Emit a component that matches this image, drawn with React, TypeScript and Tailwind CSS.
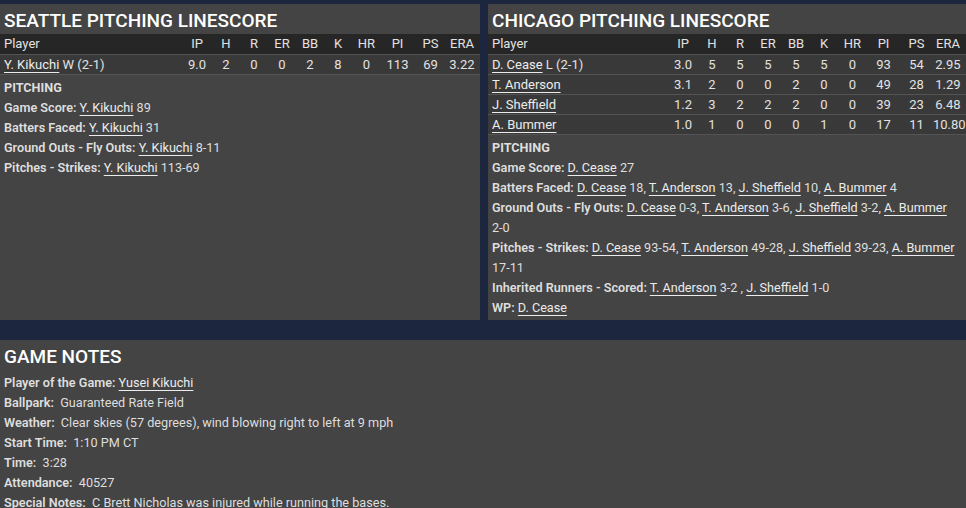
import React from 'react'

type Pitcher = {
  name: string
  note?: string
  stats: string[]
}

const cols = ['IP', 'H', 'R', 'ER', 'BB', 'K', 'HR', 'PI', 'PS', 'ERA']

const seattle: Pitcher[] = [
  { name: 'Y. Kikuchi', note: 'W (2-1)', stats: ['9.0', '2', '0', '0', '2', '8', '0', '113', '69', '3.22'] },
]

const chicago: Pitcher[] = [
  { name: 'D. Cease', note: 'L (2-1)', stats: ['3.0', '5', '5', '5', '5', '5', '0', '93', '54', '2.95'] },
  { name: 'T. Anderson', stats: ['3.1', '2', '0', '0', '2', '0', '0', '49', '28', '1.29'] },
  { name: 'J. Sheffield', stats: ['1.2', '3', '2', '2', '2', '0', '0', '39', '23', '6.48'] },
  { name: 'A. Bummer', stats: ['1.0', '1', '0', '0', '0', '1', '0', '17', '11', '10.80'] },
]

const grid = 'grid grid-cols-[1fr_30px_28px_28px_28px_28px_28px_29px_33px_33px_30px] pr-[3px]'

function A({ children }: { children: React.ReactNode }) {
  return <span className="underline underline-offset-[3px] decoration-1 text-[#ececec]">{children}</span>
}

function Label({ children }: { children: React.ReactNode }) {
  return <span className="font-semibold">{children}</span>
}

function N({ children }: { children: React.ReactNode }) {
  return <span className="whitespace-nowrap">{children}</span>
}

function Linescore({ title, rows }: { title: string; rows: Pitcher[] }) {
  return (
    <div>
      <h2 className="h-[30px] px-[4px] pt-[2px] text-[19px] leading-[30px] font-medium text-white">{title}</h2>
      <div className={`${grid} h-[20px] items-center bg-[#262626] text-[13px] text-[#e2e2e2]`}>
        <div className="pl-[4px]">Player</div>
        {cols.map((c) => (
          <div key={c} className="text-center">{c}</div>
        ))}
      </div>
      {rows.map((r) => (
        <div key={r.name} className={`${grid} h-[20px] items-center border-t border-[#545454] bg-[#393939] text-[13px] text-[#e2e2e2]`}>
          <div className="pl-[4px] whitespace-nowrap">
            <A>{r.name}</A>
            {r.note && <span> {r.note}</span>}
          </div>
          {r.stats.map((s, i) => (
            <div key={i} className="text-center">{s}</div>
          ))}
        </div>
      ))}
      <div className="h-px bg-[#545454]" />
    </div>
  )
}

function Line({ children }: { children: React.ReactNode }) {
  return <div className="leading-[20px]">{children}</div>
}

export default function App() {
  return (
    <div
      className="min-h-screen w-[966px] overflow-hidden bg-[#1c273f] pt-[4px] text-[12.65px] text-[#dedede]"
      style={{ fontFamily: 'Roboto, "Liberation Sans", sans-serif' }}
    >
      {/* Linescores */}
      <div className="flex gap-[8px]">
        <div className="w-[480px] shrink-0 bg-[#444444]">
          <Linescore title="SEATTLE PITCHING LINESCORE" rows={seattle} />
          <div className="px-[4px] pt-[3px]">
            <Line><span className="font-bold">PITCHING</span></Line>
            <Line><Label>Game Score:</Label> <A>Y. Kikuchi</A> 89</Line>
            <Line><Label>Batters Faced:</Label> <A>Y. Kikuchi</A> 31</Line>
            <Line><Label>Ground Outs - Fly Outs:</Label> <A>Y. Kikuchi</A> 8-11</Line>
            <Line><Label>Pitches - Strikes:</Label> <A>Y. Kikuchi</A> 113-69</Line>
          </div>
        </div>
        <div className="flex-1 bg-[#444444] pb-[2px]">
          <Linescore title="CHICAGO PITCHING LINESCORE" rows={chicago} />
          <div className="px-[4px] pt-[3px]">
            <Line><span className="font-bold">PITCHING</span></Line>
            <Line><Label>Game Score:</Label> <A>D. Cease</A> 27</Line>
            <Line>
              <Label>Batters Faced:</Label> <A>D. Cease</A> 18, <A>T. Anderson</A> 13, <A>J. Sheffield</A> 10, <A>A. Bummer</A> 4
            </Line>
            <Line>
              <Label>Ground Outs - Fly Outs:</Label> <A>D. Cease</A> 0-3, <A>T. Anderson</A> 3-6, <A>J. Sheffield</A> 3-2, <A>A. Bummer</A> <N>2-0</N>
            </Line>
            <Line>
              <Label>Pitches - Strikes:</Label> <A>D. Cease</A> 93-54, <A>T. Anderson</A> 49-28, <A>J. Sheffield</A> 39-23, <A>A. Bummer</A> <N>17-11</N>
            </Line>
            <Line>
              <Label>Inherited Runners - Scored:</Label> <A>T. Anderson</A> 3-2 , <A>J. Sheffield</A> 1-0
            </Line>
            <Line><Label>WP:</Label> <A>D. Cease</A></Line>
          </div>
        </div>
      </div>

      {/* Game notes */}
      <div className="mt-[20px] bg-[#444444] px-[4px] pb-[10px]">
        <h2 className="h-[33px] pt-[2px] text-[19px] leading-[30px] font-medium text-white">GAME NOTES</h2>
        <Line><Label>Player of the Game:</Label> <A>Yusei Kikuchi</A></Line>
        <Line><Label>Ballpark:</Label>&nbsp; Guaranteed Rate Field</Line>
        <Line><Label>Weather:</Label>&nbsp; Clear skies (57 degrees), wind blowing right to left at 9 mph</Line>
        <Line><Label>Start Time:</Label>&nbsp; 1:10 PM CT</Line>
        <Line><Label>Time:</Label>&nbsp; 3:28</Line>
        <Line><Label>Attendance:</Label>&nbsp; 40527</Line>
        <Line><Label>Special Notes:</Label>&nbsp; C Brett Nicholas was injured while running the bases.</Line>
      </div>
    </div>
  )
}
